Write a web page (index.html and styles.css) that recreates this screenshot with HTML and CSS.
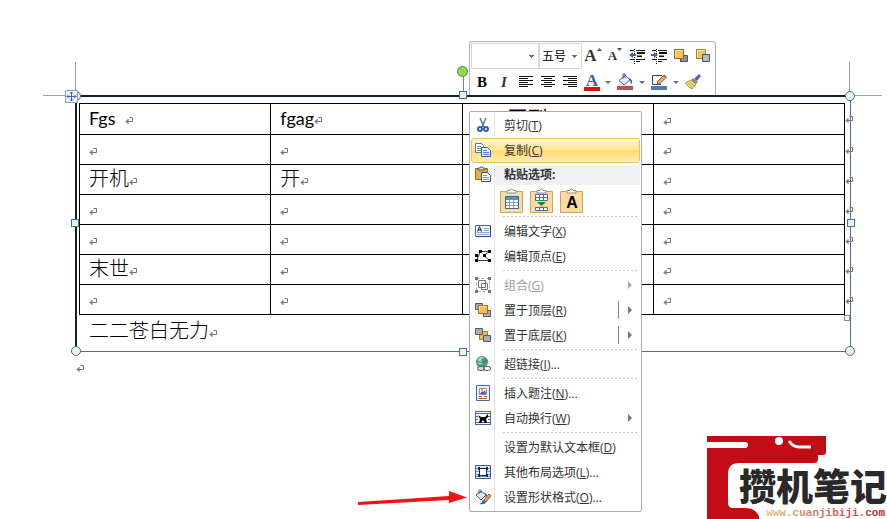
FILE: index.html
```html
<!DOCTYPE html>
<html lang="zh-CN">
<head>
    <meta charset="UTF-8">
    <title>文档</title>
    <link rel="stylesheet" href="styles.css">
</head>
<body>
    <!--Shared symbols-->
    <svg class="symbols">
        <symbol id="mark" viewBox="0 0 8 8"><path d="M4.500 .5h3v4H1M3.500 2 1 4.500 3.500 7" fill="none" stroke="#777"/><path d="M3.500 2.500v4l-2.500-2z" fill="#777"/></symbol>
    </svg>

    <!--Document-->
    <main class="page">
        <section class="frame">
            <table class="doc">
                <tr><td><span class="latin">Fgs&nbsp; </span><svg class="mark"><use href="#mark"/></svg></td><td><span class="latin">fgag</span><svg class="mark"><use href="#mark"/></svg></td><td class="indent">开到</td><td><svg class="mark"><use href="#mark"/></svg><svg class="mark row-end"><use href="#mark"/></svg></td></tr>
                <tr><td><svg class="mark"><use href="#mark"/></svg></td><td><svg class="mark"><use href="#mark"/></svg></td><td></td><td><svg class="mark"><use href="#mark"/></svg><svg class="mark row-end"><use href="#mark"/></svg></td></tr>
                <tr><td>开机<svg class="mark"><use href="#mark"/></svg></td><td>开<svg class="mark"><use href="#mark"/></svg></td><td></td><td><svg class="mark"><use href="#mark"/></svg><svg class="mark row-end"><use href="#mark"/></svg></td></tr>
                <tr><td><svg class="mark"><use href="#mark"/></svg></td><td><svg class="mark"><use href="#mark"/></svg></td><td></td><td><svg class="mark"><use href="#mark"/></svg><svg class="mark row-end"><use href="#mark"/></svg></td></tr>
                <tr><td><svg class="mark"><use href="#mark"/></svg></td><td><svg class="mark"><use href="#mark"/></svg></td><td></td><td><svg class="mark"><use href="#mark"/></svg><svg class="mark row-end"><use href="#mark"/></svg></td></tr>
                <tr><td>末世<svg class="mark"><use href="#mark"/></svg></td><td><svg class="mark"><use href="#mark"/></svg></td><td></td><td><svg class="mark"><use href="#mark"/></svg><svg class="mark row-end"><use href="#mark"/></svg></td></tr>
                <tr><td><svg class="mark"><use href="#mark"/></svg></td><td><svg class="mark"><use href="#mark"/></svg></td><td></td><td><svg class="mark"><use href="#mark"/></svg><svg class="mark row-end"><use href="#mark"/></svg></td></tr>
            </table>
            <p class="after">二二苍白无力<svg class="mark"><use href="#mark"/></svg></p>

            <!--Margin corners and handles-->
            <i class="crop crop-left"></i>
            <i class="crop crop-right"></i>
            <i class="stem"></i>
            <i class="handle rotate"></i>
            <i class="handle round top left"></i>
            <i class="handle round top right"></i>
            <i class="handle round bottom left"></i>
            <i class="handle round bottom right"></i>
            <i class="handle top center"></i>
            <i class="handle bottom center"></i>
            <i class="handle middle left"></i>
            <i class="handle middle right"></i>
            <i class="resize"></i>
            <svg class="move" viewBox="0 0 13 13"><path d="M.5.5h12v12H.5z" fill="#eef3fa" stroke="#9a9fa8"/><path d="M6.500 2v9M2 6.500h9M5 3.500l1.500-1.500L8 3.500M5 9.500 6.500 11 8 9.500M3.500 5 2 6.500 3.500 8M9.500 5 11 6.500 9.500 8" fill="none" stroke="#3d62a8"/></svg>
        </section>
        <p class="last"><svg class="mark"><use href="#mark"/></svg></p>
    </main>

    <!--Mini toolbar-->
    <div class="toolbar">
        <div class="tool-row">
            <select class="font-name" aria-label="字体"><option></option></select>
            <select class="font-size" aria-label="字号"><option>五号</option></select>
            <button class="tool letter grow" aria-label="增大字体">A<svg class="tip" viewBox="0 0 5 3"><path d="M0 3h5L2.500 0z" fill="#35558c"/></svg></button>
            <button class="tool letter shrink" aria-label="减小字体">A<svg class="tip" viewBox="0 0 5 3"><path d="M0 0h5L2.500 3z" fill="#35558c"/></svg></button>
            <button class="tool" aria-label="减少缩进"><svg viewBox="0 0 16 16"><path d="M1 2.500h4M7 2.500h9M8 5h8M8 8h5M1 11.500h4M7 11.500h9M7 13.500h4" stroke="#111"/><path d="M8 4.500h8M8 5.500h8M8 8.500h5" stroke="#111"/><path d="M5.500 1v15" stroke="#111" stroke-dasharray="1 1"/><path d="M0 7l4-3v2h3v2H4v2z" fill="#3d65ba"/></svg></button>
            <button class="tool" aria-label="增加缩进"><svg viewBox="0 0 16 16"><path d="M1 2.500h4M7 2.500h9M8 5h8M8 8h5M1 11.500h4M7 11.500h9M7 13.500h4" stroke="#111"/><path d="M8 4.500h8M8 5.500h8M8 8.500h5" stroke="#111"/><path d="M5.500 1v15" stroke="#111" stroke-dasharray="1 1"/><path d="M7 7 3 4v2H0v2h3v2z" fill="#3d65ba"/></svg></button>
            <button class="tool" aria-label="置于顶层"><svg viewBox="0 0 16 16"><path d="M7.500 7.500h7v6h-7z" fill="#8d939c" stroke="#484f5a"/><path d="M1.500 1.500h9v9h-9z" fill="#f2c256" stroke="#8d6c28"/><path d="M2.500 9V2.500H9" fill="none" stroke="#fbe4a2"/></svg></button>
            <button class="tool" aria-label="置于底层"><svg viewBox="0 0 16 16"><path d="M1.500 1.500h9v9h-9z" fill="#f2c256" stroke="#a48549"/><path d="M2.500 9V2.500H9" fill="none" stroke="#fbe4a2"/><path d="M7.500 6.500h7v7h-7z" fill="#b5b9c0" stroke="#484f5a"/></svg></button>
        </div>
        <div class="tool-row">
            <button class="tool letter bold" aria-label="加粗">B</button>
            <button class="tool letter italic" aria-label="倾斜">I</button>
            <button class="tool" aria-label="左对齐"><svg viewBox="0 0 16 16"><path d="M1 2.500h14M1 4.500h9M1 6.500h14M1 8.500h9M1 10.500h14M1 12.500h9" stroke="#111"/></svg></button>
            <button class="tool" aria-label="居中"><svg viewBox="0 0 16 16"><path d="M1 2.500h14M4 4.500h8M1 6.500h14M4 8.500h8M1 10.500h14M4 12.500h8" stroke="#111"/></svg></button>
            <button class="tool" aria-label="右对齐"><svg viewBox="0 0 16 16"><path d="M1 2.500h14M6 4.500h9M1 6.500h14M6 8.500h9M1 10.500h14M6 12.500h9" stroke="#111"/></svg></button>
            <button class="tool letter colour" aria-label="字体颜色">A</button>
            <button class="drop" aria-label="更多字体颜色"></button>
            <button class="tool" aria-label="形状填充"><svg viewBox="0 0 16 16"><path d="M2 6.500 8 1l5 5-6 5z" fill="#e8edf5" stroke="#3f5f91"/><path d="M6 5V1q0-2 2-1v4" fill="none" stroke="#3f5f91"/><path d="M12 4q4 1 3 6-2-1-2-4z" fill="#2e68bf"/><path d="M0 12h16v4H0z" fill="#b9504c"/></svg></button>
            <button class="drop" aria-label="更多填充颜色"></button>
            <button class="tool" aria-label="形状轮廓"><svg viewBox="0 0 16 16"><path d="M11 1.500H1.500v9H10" fill="none" stroke="#39435a"/><path d="M6 10.500 7 7l6-6 2.500 2L9 9.500z" fill="#e6ad69" stroke="#93583b"/><path d="M13 1l2.500 2-1 1L12 2z" fill="#c65454"/><path d="M0 12h16v4H0z" fill="#4a7ebb"/></svg></button>
            <button class="drop" aria-label="更多轮廓颜色"></button>
            <button class="tool" aria-label="格式刷"><svg viewBox="0 0 16 16"><path d="M14 0l2 2-4 5-3-2z" fill="#665da5"/><path d="M8 4l5 4-2 2-5-4z" fill="#8888a0"/><path d="M6 6l5 4-4 5Q3 13 .5 9z" fill="#efe16a" stroke="#a2953f"/><path d="M3 9l4 4M5 8l4 4" stroke="#b7a63e"/></svg></button>
        </div>
    </div>

    <!--Context menu-->
    <div class="menu">
        <button class="item"><svg class="icon" viewBox="0 0 16 16"><path d="M5 1l4 9M11 1l-4 9" stroke="#637089" stroke-width="1.500"/><circle cx="5" cy="12" r="2" fill="none" stroke="#3559b5" stroke-width="2"/><circle cx="11" cy="12" r="2" fill="none" stroke="#3559b5" stroke-width="2"/></svg><span>剪切(<u>T</u>)</span></button>
        <button class="item active"><svg class="icon" viewBox="0 0 16 16"><path d="M.5 1.500h6l2 2v7h-8z" fill="#fff" stroke="#5179b5"/><path d="M2 4.500h4M2 6.500h4M2 8.500h4" stroke="#4d87d0"/><path d="M6.500 5.500h6l3 3v6h-9z" fill="#e6f0fc" stroke="#345ea2"/><path d="M8 8.500h4M8 10.500h6M8 12.500h6" stroke="#4d87d0"/></svg><span>复制(<u>C</u>)</span></button>
        <div class="item heading"><svg class="icon" viewBox="0 0 16 16"><path d="M.5 2.500h12v11H.5z" fill="#e2b23a" stroke="#8b6b25"/><path d="M3 4V2h2q1-3 3 0h2v2z" fill="#ddd" stroke="#555"/><path d="M6.500 6.500h6l3 3v6h-9z" fill="#fff" stroke="#3e4f72"/><path d="M8 9.500h4M8 11.500h6M8 13.500h6" stroke="#7893c0"/></svg><span>粘贴选项:</span></div>
        <div class="paste">
            <button class="option" aria-label="保留源格式"><svg viewBox="0 0 23 25"><path d="M.5 2.500h22v21H.5z" fill="#fbdc9e" stroke="#caa569"/><path d="M7 4V1.500h3Q11.500-2 13 1.500h3V4z" fill="#fff" stroke="#8c8c8c"/><path d="M5.500 7.500h13v12h-13z" fill="#fff" stroke="#36609d"/><path d="M6 8h12v3H6z" fill="#5f8fd0"/><path d="M6 13.500h12M6 16.500h12M9.500 11v8M13.500 11v8" stroke="#7fa6da"/></svg></button>
            <button class="option" aria-label="合并表格"><svg viewBox="0 0 23 25"><path d="M.5 2.500h22v21H.5z" fill="#fbdc9e" stroke="#caa569"/><path d="M7 4V1.500h3Q11.500-2 13 1.500h3V4z" fill="#fff" stroke="#8c8c8c"/><path d="M5.500 5.500h12v6h-12zM5.500 18.500h12v3h-12zM5.500 8.500h12M9.500 5v6M13.500 5v6M9.500 18v3M13.500 18v3" fill="#fff" stroke="#466ca5"/><path d="M7 13h9l-4.500 4z" fill="#198a28"/></svg></button>
            <button class="option" aria-label="只保留文本"><svg viewBox="0 0 23 25"><path d="M.5 2.500h22v21H.5z" fill="#fbdc9e" stroke="#caa569"/><path d="M7 4V1.500h3Q11.500-2 13 1.500h3V4z" fill="#fff" stroke="#8c8c8c"/><text x="12" y="19" text-anchor="middle" class="plain">A</text></svg></button>
        </div>
        <hr>
        <button class="item"><svg class="icon" viewBox="0 0 16 16"><path d="M.5 2.500h15v11H.5z" fill="#f2f7fd" stroke="#496d9f"/><path d="M1 13.500h14.500V3" fill="none" stroke="#284879"/><path d="M9 5.500h5M9 7.500h5M2 9.500h12M2 11.500h12" stroke="#88aad9"/><path d="M2.500 8.500l2-5 2 5M3 7h3" fill="none" stroke="#222"/></svg><span>编辑文字(<u>X</u>)</span></button>
        <button class="item"><svg class="icon" viewBox="0 0 16 16"><path d="M1.500 12.500l4-9h9l-6 4 6 5z" fill="none" stroke="#29426d"/><path d="M0 11h3v3H0zM0 6h3v3H0zM4 2h3v3H4zM13 2h3v3h-3zM8 6h3v3H8zM13 11h3v3h-3z" fill="#000"/></svg><span>编辑顶点(<u>E</u>)</span></button>
        <hr>
        <button class="item" disabled><svg class="icon" viewBox="0 0 16 16"><path d="M1.500 1.500h13v13h-13z" fill="none" stroke="#aaa" stroke-dasharray="3 2"/><path d="M3.500 3.500h7v7h-7zM6.500 6.500h6v6h-6z" fill="none" stroke="#777"/><path d="M0 0h3v3H0zM13 0h3v3h-3zM0 13h3v3H0zM13 13h3v3h-3z" fill="#777"/></svg><span>组合(<u>G</u>)</span><b class="arrow"></b></button>
        <button class="item"><svg class="icon" viewBox="0 0 16 16"><path d="M.5 1.500h7v6h-7zM8.500 8.500h7v6h-7z" fill="#a9adb4" stroke="#555c67"/><path d="M3.500 3.500h9v8h-9z" fill="#f3bd50" stroke="#987028"/><path d="M4.500 10V4.500H11" stroke="#fde3a0" fill="none"/></svg><span>置于顶层(<u>R</u>)</span><b class="arrow split"></b></button>
        <button class="item"><svg class="icon" viewBox="0 0 16 16"><path d="M4.500 4.500h8v8h-8z" fill="#f3bd50" stroke="#a57c34"/><path d="M.5 1.500h7v6h-7zM8.500 8.500h7v6h-7z" fill="#a9adb4" stroke="#555c67"/></svg><span>置于底层(<u>K</u>)</span><b class="arrow split"></b></button>
        <hr>
        <button class="item"><svg class="icon" viewBox="0 0 16 16"><circle cx="7" cy="6" r="6" fill="#479b78"/><path d="M3 3q3-3 6-2l-3 3 2 3-3 2-3-3z" fill="#a9dda6"/><path d="M1 5q6 3 12-1" fill="none" stroke="#3b75a5"/><rect x="2.500" y="10.500" width="7" height="4" rx="2" fill="#ccd6e4" stroke="#49617f"/><rect x="8.500" y="10.500" width="7" height="4" rx="2" fill="none" stroke="#49617f"/></svg><span>超链接(<u>I</u>)...</span></button>
        <hr>
        <button class="item"><svg class="icon" viewBox="0 0 16 16"><path d="M1.500.5h13v15h-13z" fill="#eaf2fc" stroke="#47699d"/><path d="M4.500 3.500h7v6h-7z" fill="#fff" stroke="#7592c0"/><path d="M5 9l2-3 1 1 2-2 1 4z" fill="#b74335"/><circle cx="7" cy="5" r="1" fill="#dc803d"/><path d="M4 11.500h3M9 11.500h3M4 13.500h8" stroke="#c65b42"/></svg><span>插入题注(<u>N</u>)...</span></button>
        <button class="item"><svg class="icon" viewBox="0 0 16 16"><path d="M0 1.500h16M0 3.500h16M0 12.500h16M0 14.500h16M.5 1v14M15.500 1v14M0 6.500h3M0 9.500h3M13 6.500h3M13 9.500h3" stroke="#456a9f"/><path d="M3 5l3 2h4l3-3v3l-2 2 1 4h-2l-2-3-2 3H4l1-4z" fill="#000"/></svg><span>自动换行(<u>W</u>)</span><b class="arrow"></b></button>
        <hr>
        <button class="item"><span class="icon"></span><span>设置为默认文本框(<u>D</u>)</span></button>
        <button class="item"><svg class="icon" viewBox="0 0 16 16"><path d="M.5 1.500h15v13H.5z" fill="#dce8f8" stroke="#3c6299"/><path d="M1 4.500h14M1 7.500h14M1 10.500h14M1 12.500h14" stroke="#7598c7"/><path d="M4.500 4.500h7v7h-7z" fill="#fff" stroke="#14264a"/><path d="M3 3h2v3H3zM11 3h2v3h-2zM3 10h2v3H3zM11 10h2v3h-2z" fill="#14264a"/></svg><span>其他布局选项(<u>L</u>)...</span></button>
        <button class="item"><svg class="icon" viewBox="0 0 16 16"><path d="M1 6l5-4 5 4-5 5z" fill="#e5ecf5" stroke="#3b5884"/><path d="M4 5V1.500Q5-.5 6 1.500V4" fill="none" stroke="#3b5884"/><path d="M10 4q3 1 2 5l-2-2z" fill="#346dbd"/><path d="M14 5l2 2-5 6-2-2z" fill="#dda358" stroke="#8d6438"/><path d="M11 13q-1 3-7 2 3-1 4-4z" fill="#315fb0"/></svg><span>设置形状格式(<u>O</u>)...</span></button>
    </div>

    <!--Red arrow-->
    <svg class="pointer" viewBox="0 0 110 18"><path d="M0 12 91 6V1l18 6.500-18 5.500v-3L0 15z" fill="#f01414"/></svg>

    <!--Site logo-->
    <svg class="logo" viewBox="0 0 180 83">
        <defs><linearGradient id="fade"><stop offset="0" stop-color="#efb98c"/><stop offset="1" stop-color="#c2232a"/></linearGradient></defs>
        <path d="M0 0h119v16q0 3-3 3h-5v4q0 4-4 4H32q-11 0-11 11v29q0 5 5 5h12q8 0 12 5 3 4 2 6H0V12h38q3 0 3-3t-3-3H0z" fill="#c30d16"/>
        <path d="M82 5q4 6 10 6h12" fill="none" stroke="#fff" stroke-width="3"/>
        <circle cx="72" cy="5" r="4" fill="#fff"/>
        <text x="32" y="65" class="logo-name">攒机笔记</text>
        <text x="178" y="80" text-anchor="end" class="logo-url" fill="url(#fade)">www.cuanjibiji.com</text>
    </svg>
</body>
</html>
```
FILE: styles.css
```css
body{
    margin: 0;
    background: #fff;
    color: #333;
    font-family: "Open Sans", "Noto Sans CJK SC", sans-serif;
    font-size: 12px;
    overflow: hidden;
}
p{
    margin: 0;
}
button{
    border: 0;
    padding: 0;
    background: none;
    color: inherit;
    font: inherit;
}
.symbols{
    display: none;
}

/* document */
.page{
    padding: 95px 36px 0 75px;
}
.frame{
    position: relative;
    border-top: 2px solid #10202c;
    border-left: 2px solid #10202c;
    border-right: 1px solid #56718c;
    border-bottom: 1px solid #56718c;
    padding: 6px 5px 0 2px;
    z-index: 2;
}
.doc{
    width: 100%;
    table-layout: fixed;
    border-collapse: collapse;
}
.doc td{
    height: 27px;
    padding: 0 0 2px 9px;
    border: 1px solid #000;
    position: relative;
}
.doc td, .after{
    color: #000;
    font-family: Lato, "Noto Sans CJK SC", sans-serif;
    font-size: 20px;
    font-weight: 300;
    line-height: 27px;
    white-space: nowrap;
}
.doc .latin{
    font-size: 18px;
    font-weight: 400;
}
.doc .indent{
    padding-left: 45px;
    font-weight: 400;
}
.mark{
    width: 8px;
    height: 8px;
}
.doc .row-end{
    position: absolute;
    right: -9px;
    top: 12px;
}
.after{
    padding: 2px 0 7px 10px;
}
.last{
    padding: 8px 0 0 1px;
}

/* selection handles over the frame */
.handle, .crop, .stem, .resize, .move{
    position: absolute;
}
.handle{
    box-sizing: border-box;
    width: 8px;
    height: 8px;
    border: 1px solid #4d7186;
    background: #e3f4fa;
}
.round{
    width: 10px;
    height: 10px;
    border-radius: 50%;
}
.top{ top: -6px; }
.bottom{ bottom: -5px; }
.left{ left: -6px; }
.right{ right: -5px; }
.center{ left: calc(50% - 5px); }
.middle{ top: calc(50% - 5px); }
.rotate{
    width: 11px;
    height: 11px;
    border-radius: 50%;
    border-color: #5b8a35;
    background: #8ddc4b;
    left: calc(50% - 7px);
    top: -31px;
}
.stem{
    left: calc(50% - 1px);
    top: -21px;
    height: 18px;
    border-left: 1px solid #6c8898;
}
.crop{
    width: 32px;
    height: 33px;
    top: -35px;
    border-bottom: 1px solid #a0a0a0;
}
.crop-left{
    left: -34px;
    border-right: 1px solid #a0a0a0;
}
.crop-right{
    right: -32px;
    border-left: 1px solid #a0a0a0;
}
.resize{
    right: 0;
    bottom: 30px;
    width: 4px;
    height: 4px;
    border: 1px solid #888;
    background: #fff;
}
.move{
    left: -12px;
    top: -7px;
    width: 13px;
    height: 13px;
}

/* mini toolbar */
.toolbar{
    position: absolute;
    left: 469px;
    top: 41px;
    box-sizing: border-box;
    width: 247px;
    padding: 1px;
    border: 1px solid #b0b4bb;
    border-bottom: 0;
    border-radius: 3px 3px 0 0;
    background: #fff;
    z-index: 1;
}
.tool-row{
    display: flex;
    align-items: center;
    height: 26px;
}
.toolbar select{
    appearance: none;
    box-sizing: border-box;
    height: 26px;
    border: 1px solid #d5d8dd;
    border-radius: 0;
    padding: 0 2px 2px;
    color: #000;
    background:
        linear-gradient(#6b7078, #6b7078) no-repeat right 4px top 11px / 5px 1px,
        linear-gradient(#6b7078, #6b7078) no-repeat right 5px top 12px / 3px 1px,
        linear-gradient(#6b7078, #6b7078) no-repeat right 6px top 13px / 1px 1px,
        #fff;
    font-family: "Noto Sans CJK SC", sans-serif;
    font-size: 12px;
}
.toolbar .font-name{ width: 68px; }
.toolbar .font-size{ width: 43px; }
.tool{
    display: flex;
    align-items: center;
    justify-content: center;
    width: 22px;
    height: 22px;
}
.tool svg{
    width: 16px;
    height: 16px;
    overflow: visible;
}
.letter{
    color: #333;
    font-family: "Liberation Serif", serif;
    font-size: 17px;
    font-weight: bold;
    line-height: 20px;
}
.tool .tip{
    width: 5px;
    height: 3px;
    align-self: flex-start;
    margin-top: 3px;
}
.shrink{ font-size: 13px; }
.bold{
    color: #000;
    font-size: 15px;
}
.italic{
    font-size: 15px;
    font-style: italic;
}
.colour{
    box-sizing: border-box;
    width: 16px;
    height: 17px;
    margin: 0 2px 0 3px;
    border-bottom: 4px solid #e01010;
    color: #3c5fa0;
    line-height: 13px;
}
.drop{
    display: flex;
    justify-content: center;
    width: 12px;
}
.drop::before{
    content: "";
    border: 3px solid transparent;
    border-top-color: #666c75;
    border-bottom: 0;
}

/* context menu */
.menu{
    position: absolute;
    left: 469px;
    top: 111px;
    box-sizing: border-box;
    width: 173px;
    padding: 1px;
    border: 1px solid #a7abb0;
    border-radius: 2px;
    background: linear-gradient(90deg, #fff 24px, #e2e4e7 24px, #e2e4e7 25px, #fff 25px);
    z-index: 3;
}
.item{
    display: flex;
    align-items: center;
    box-sizing: border-box;
    width: 100%;
    height: 25px;
    padding: 0 8px 2px 4px;
    gap: 13px;
    white-space: nowrap;
}
.icon{
    flex: none;
    width: 16px;
    height: 16px;
}
.item:disabled{
    color: #a0a0a0;
}
.active{
    border: 1px solid #e5c365;
    border-radius: 3px;
    padding-left: 3px;
    background: linear-gradient(#fff6d5, #ffe694 45%, #ffdc72 55%, #fff0ae);
}
.heading{
    height: 24px;
    font-weight: bold;
    background: linear-gradient(#eff1f5, #eff1f5) no-repeat 25px 2px / 100% 20px;
}
.paste{
    display: flex;
    gap: 7px;
    height: 28px;
    padding-left: 29px;
}
.option svg{
    display: block;
    width: 23px;
    height: 25px;
    overflow: visible;
}
.plain{
    font: bold 16px "Liberation Sans", sans-serif;
    fill: #000;
}
.menu hr{
    height: 1px;
    margin: 1px 2px 2px 32px;
    border: 0;
    background: repeating-linear-gradient(90deg, #c3c5c8 0 2px, #fff 2px 4px);
}
.arrow{
    display: flex;
    align-items: center;
    height: 18px;
    margin-left: auto;
    padding-left: 9px;
}
.arrow::after{
    content: "";
    border: 4px solid transparent;
    border-left-color: #777;
    border-right: 0;
}
.item:disabled .arrow::after{
    border-left-color: #aaa;
}
.split{
    border-left: 1px solid #888;
}

.pointer{
    position: absolute;
    left: 358px;
    top: 490px;
    width: 110px;
    height: 18px;
    z-index: 4;
}
.logo{
    position: absolute;
    right: 0;
    bottom: 0;
    width: 180px;
    height: 83px;
}
.logo-name{
    font: 900 37px "Noto Sans CJK SC", sans-serif;
    fill: #2b2829;
}
.logo-url{
    font: bold 11px "Liberation Mono", monospace;
}
```
